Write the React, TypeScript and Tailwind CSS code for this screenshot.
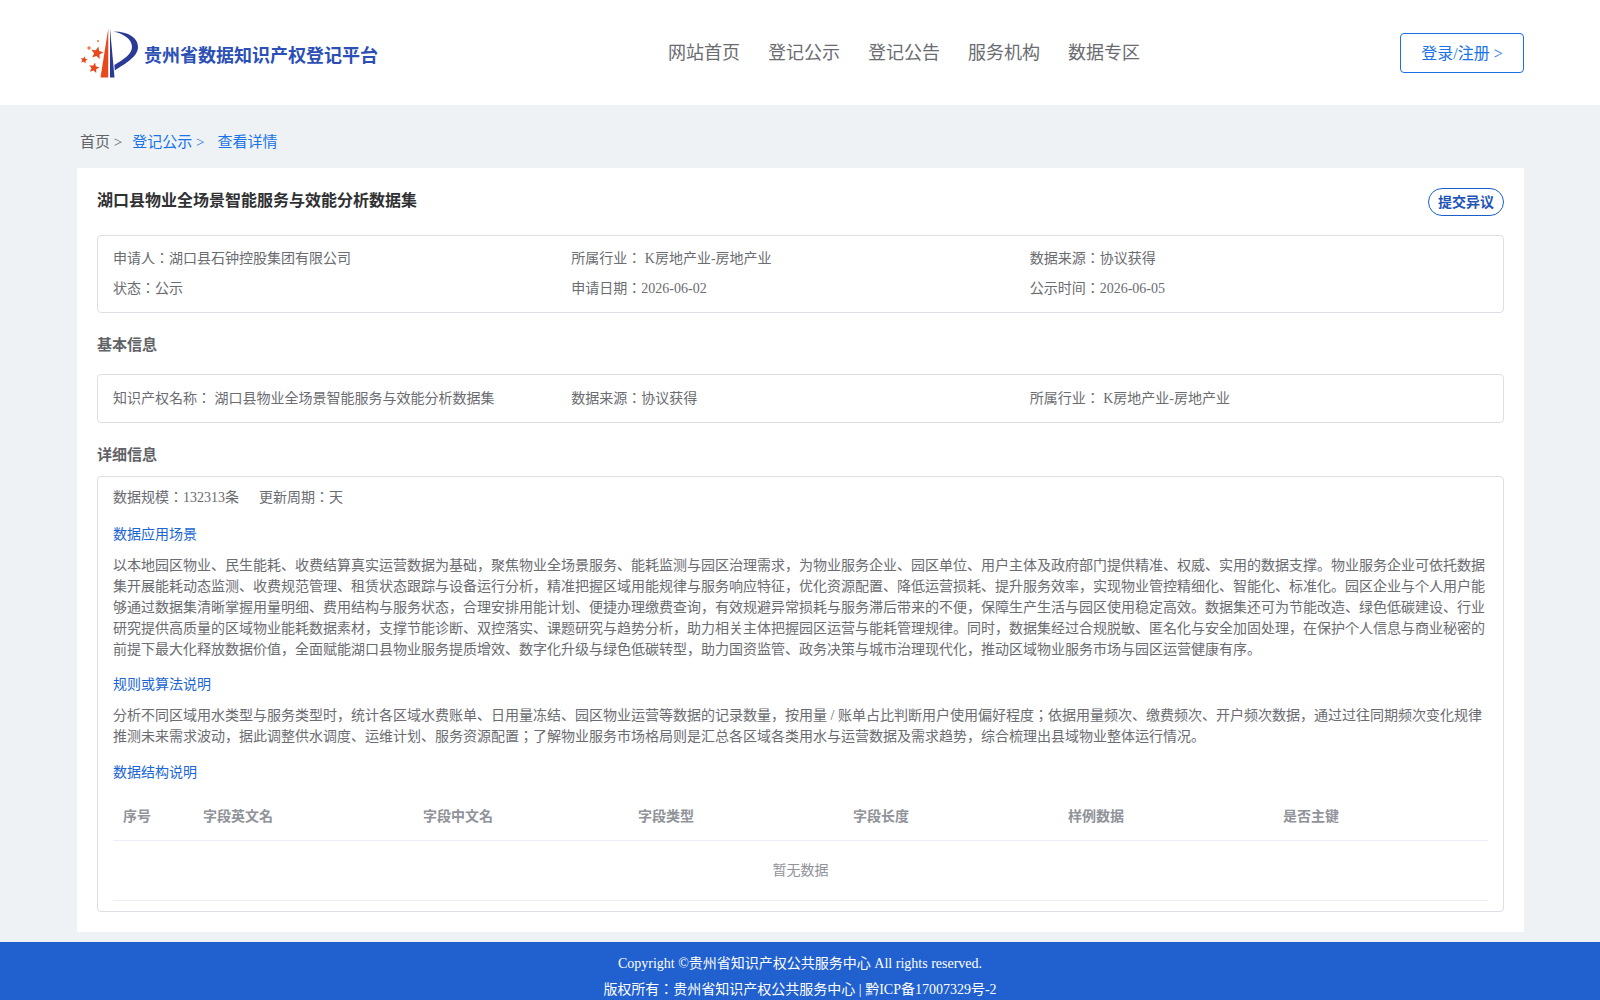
const navItems = ["网站首页", "登记公示", "登记公告", "服务机构", "数据专区"]
const columns = ["字段英文名", "字段中文名", "字段类型", "字段长度", "样例数据", "是否主键"]

function starPoints(cx: number, cy: number, r: number) {
  const pts: string[] = []
  for (let i = 0; i < 10; i++) {
    const rad = i % 2 === 0 ? r : r * 0.45
    const a = -Math.PI / 2 + 0.2 + (i * Math.PI) / 5
    pts.push(`${(cx + rad * Math.cos(a)).toFixed(1)},${(cy + rad * Math.sin(a)).toFixed(1)}`)
  }
  return pts.join(" ")
}

function Logo() {
  return (
    <svg width="60" height="52" viewBox="0 0 60 52" className="shrink-0">
      <path d="M28.3 0.5 L20.5 49.5 L28.2 49.5 Z" fill="#e8481c" />
      <path d="M30 0.5 L30 49.5 L34.5 49.5 Z" fill="#2a3a96" />
      <path d="M33.5 3.5 C49 3.5 58 10 58 19 C58 28.5 46 35 34.8 42.5 L34.4 37 C44 31 52 26 52 19 C52 11 44 6 33.5 3.5 Z" fill="#2a3a96" />
      <polygon points={starPoints(17, 25, 6.5)} fill="#e8481c" />
      <polygon points={starPoints(14, 40, 5.5)} fill="#e8481c" />
      <polygon points={starPoints(4, 32, 3.8)} fill="#e8481c" />
      <circle cx="9" cy="20" r="1.7" fill="#ee7a52" />
      <circle cx="18" cy="13" r="1.1" fill="#ee7a52" />
    </svg>
  )
}

function Info({ children }: { children: React.ReactNode }) {
  return <div className="whitespace-pre">{children}</div>
}

export default function App() {
  return (
    <div className="min-h-screen bg-[#eef2f5] font-['Liberation_Serif','Noto_Sans_CJK_JP',serif] text-[14px] text-[#6a6c71]">
      <header className="flex h-[105px] items-start bg-white pr-[76px] pl-[80px]">
        <div className="mt-[28px] flex w-[588px] items-center">
          <Logo />
          <span className="mt-[4px] ml-[4px] text-[18px] font-bold text-[#2c4fb5]">贵州省数据知识产权登记平台</span>
        </div>
        <nav className="mt-[40px] flex gap-[28px] text-[18px] leading-[26px] text-[#6a6c71]">
          {navItems.map((item) => (
            <span key={item}>{item}</span>
          ))}
        </nav>
        <button className="mt-[33px] ml-auto h-[40px] w-[124px] rounded-[4px] border border-[#1a6ee6] pt-[2px] text-[16px] text-[#1a73e8]">
          登录/注册 &gt;
        </button>
      </header>

      <main className="pr-[76px] pb-[10px] pl-[77px]">
        <div className="flex h-[63px] items-center pt-[12px] pl-[3px] text-[15px]">
          <span className="text-[#606266]">首页 &gt;</span>
          <span className="ml-[10px] text-[#1a73e8]">登记公示 &gt;</span>
          <span className="ml-[13px] text-[#1a73e8]">查看详情</span>
        </div>

        <section className="bg-white px-[20px] pt-[20px] pb-[20px]">
          <div className="flex h-[47px] items-start justify-between">
            <h1 className="mt-[1px] text-[16px] font-bold text-[#303133]">湖口县物业全场景智能服务与效能分析数据集</h1>
            <button className="h-[28px] w-[76px] rounded-[14px] border border-[#1a5fc8] text-[14px] font-bold text-[#1f55b8]">
              提交异议
            </button>
          </div>

          <div className="grid grid-cols-3 gap-y-[10px] rounded-[4px] border border-[#dcdfe6] px-[15px] pt-[13px] pb-[13px] leading-[20px]">
            <Info>申请人：湖口县石钟控股集团有限公司</Info>
            <Info>所属行业： K房地产业-房地产业</Info>
            <Info>数据来源：协议获得</Info>
            <Info>状态：公示</Info>
            <Info>申请日期：2026-06-02</Info>
            <Info>公示时间：2026-06-05</Info>
          </div>

          <h2 className="mt-[22px] mb-[18px] text-[15px] leading-[21px] font-bold text-[#606266]">基本信息</h2>

          <div className="grid grid-cols-3 rounded-[4px] border border-[#dcdfe6] px-[15px] pt-[14px] pb-[13px] leading-[20px]">
            <Info>知识产权名称： 湖口县物业全场景智能服务与效能分析数据集</Info>
            <Info>数据来源：协议获得</Info>
            <Info>所属行业： K房地产业-房地产业</Info>
          </div>

          <h2 className="mt-[22px] mb-[10px] text-[15px] leading-[21px] font-bold text-[#606266]">详细信息</h2>

          <div className="rounded-[4px] border border-[#dcdfe6] px-[15px] pt-[11px] pb-[10px]">
            <div className="flex gap-[20px] leading-[20px]">
              <span>数据规模：132313条</span>
              <span>更新周期：天</span>
            </div>

            <h3 className="mt-[17px] leading-[20px] text-[#1a66d6]">数据应用场景</h3>
            <p className="mt-[10px] leading-[21px]">
              以本地园区物业、民生能耗、收费结算真实运营数据为基础，聚焦物业全场景服务、能耗监测与园区治理需求，为物业服务企业、园区单位、用户主体及政府部门提供精准、权威、实用的数据支撑。物业服务企业可依托数据集开展能耗动态监测、收费规范管理、租赁状态跟踪与设备运行分析，精准把握区域用能规律与服务响应特征，优化资源配置、降低运营损耗、提升服务效率，实现物业管控精细化、智能化、标准化。园区企业与个人用户能够通过数据集清晰掌握用量明细、费用结构与服务状态，合理安排用能计划、便捷办理缴费查询，有效规避异常损耗与服务滞后带来的不便，保障生产生活与园区使用稳定高效。数据集还可为节能改造、绿色低碳建设、行业研究提供高质量的区域物业能耗数据素材，支撑节能诊断、双控落实、课题研究与趋势分析，助力相关主体把握园区运营与能耗管理规律。同时，数据集经过合规脱敏、匿名化与安全加固处理，在保护个人信息与商业秘密的前提下最大化释放数据价值，全面赋能湖口县物业服务提质增效、数字化升级与绿色低碳转型，助力国资监管、政务决策与城市治理现代化，推动区域物业服务市场与园区运营健康有序。
            </p>

            <h3 className="mt-[15px] leading-[20px] text-[#1a66d6]">规则或算法说明</h3>
            <p className="mt-[10px] leading-[21px]">
              分析不同区域用水类型与服务类型时，统计各区域水费账单、日用量冻结、园区物业运营等数据的记录数量，按用量 / 账单占比判断用户使用偏好程度；依据用量频次、缴费频次、开户频次数据，通过过往同期频次变化规律推测未来需求波动，据此调整供水调度、运维计划、服务资源配置；了解物业服务市场格局则是汇总各区域各类用水与运营数据及需求趋势，综合梳理出县域物业整体运行情况。
            </p>

            <h3 className="mt-[16px] leading-[20px] text-[#1a66d6]">数据结构说明</h3>

            <div className="mt-[10px]">
              <div className="flex h-[48px] items-center border-b border-[#ebeef5] font-bold text-[#909399]">
                <div className="w-[90px] pl-[10px]">序号</div>
                <div className="grid flex-1 grid-cols-[220px_215px_215px_215px_215px_1fr]">
                  {columns.map((c) => (
                    <div key={c}>{c}</div>
                  ))}
                </div>
              </div>
              <div className="flex h-[60px] items-center justify-center border-b border-[#ebeef5] text-[#909399]">
                暂无数据
              </div>
            </div>
          </div>
        </section>
      </main>

      <footer className="flex h-[60px] flex-col items-center bg-[#2060cf] pt-[9px] leading-[26px] text-white">
        <div>Copyright ©贵州省知识产权公共服务中心 All rights reserved.</div>
        <div>版权所有：贵州省知识产权公共服务中心 | 黔ICP备17007329号-2</div>
      </footer>
    </div>
  )
}
